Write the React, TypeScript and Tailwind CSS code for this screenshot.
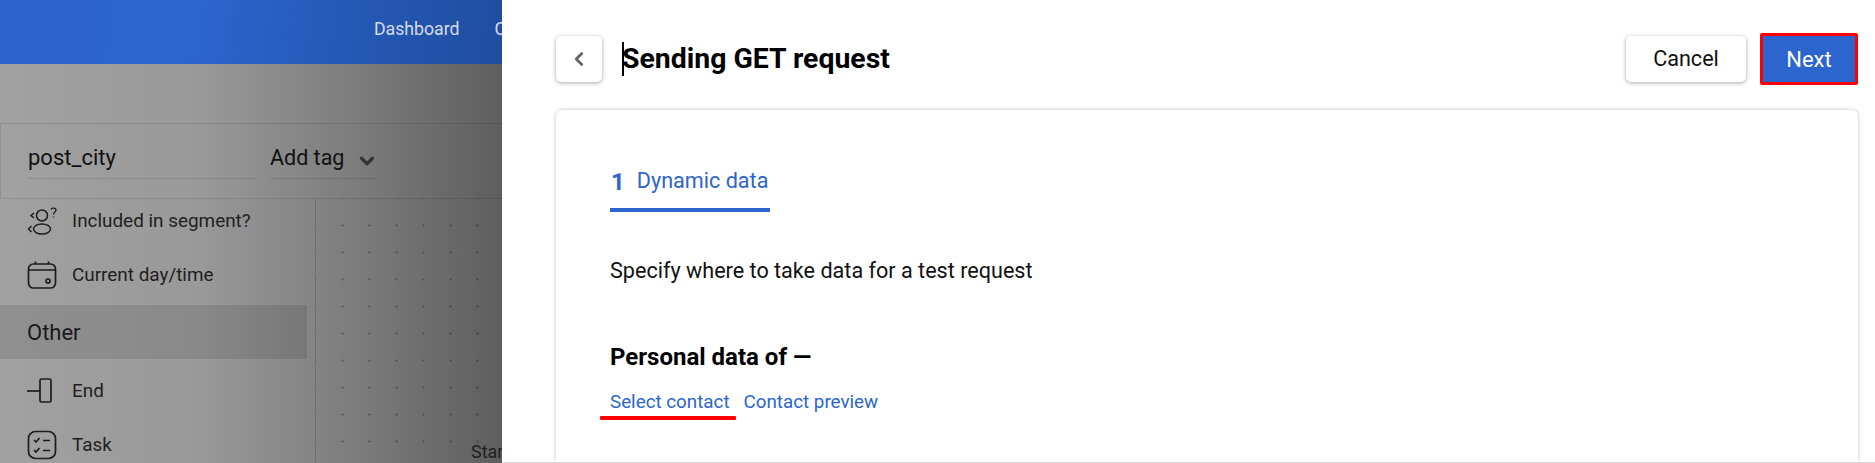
import { ChevronLeft, ChevronDown } from "lucide-react";

const SegmentIcon = () => (
   <svg width="32" height="30" viewBox="0 0 32 30" fill="none" stroke="#1c1c1c" strokeWidth="1.5">
      <ellipse cx="15" cy="9.5" rx="5.5" ry="5.500" />
      <ellipse cx="15" cy="23" rx="8.500" ry="5" />
      <path d="M7 7 4 9.500 7 12M4.500 20 1.500 23l3 3" />
      <path d="M24 3.500c.5-2 5-2 5 .5 0 2-2.500 2-2.500 4.500M26.500 10.500v1" strokeWidth="1.300" />
   </svg>
);

const CalendarIcon = () => (
   <svg width="30" height="30" viewBox="0 0 30 30" fill="none" stroke="#1c1c1c" strokeWidth="1.7">
      <rect x="1.500" y="4" width="27" height="24" rx="5" />
      <path d="M1.500 10h27M8.500 1.500V4M21.500 1.500V4" />
      <circle cx="21" cy="21" r="2" />
   </svg>
);

const EndIcon = () => (
   <svg width="26" height="26" viewBox="0 0 26 26" fill="none" stroke="#1c1c1c" strokeWidth="1.700">
      <path d="M0 13h13" />
      <rect x="13" y="1" width="11" height="23" rx="1.500" />
   </svg>
);

const TaskIcon = () => (
   <svg width="30" height="30" viewBox="0 0 30 30" fill="none" stroke="#1c1c1c" strokeWidth="1.700">
      <rect x="1.500" y="1.500" width="27" height="27" rx="7" />
      <path d="M7 10l2 2 3.500-4M7 20l2 2 3.500-4M16 10.500h7M16 20.500h7" />
   </svg>
);

const SideItem = ({ icon, label }: { icon: any; label: string }) => (
   <div className="flex h-[54px] items-center">
      <div className="flex w-[72px] justify-start pl-[27px] flex-none">{icon}</div>
      <span className="text-[18.900px] text-[#1f1f1f]">{label}</span>
   </div>
);

const LeftSide = () => (
   <div className="flex w-[502px] flex-none flex-col overflow-hidden">
      <div className="flex h-[64px] flex-none items-start bg-[linear-gradient(100deg,#2b63ca_0%,#2c65ce_38%,#1f4d9f_100%)] pl-[374px] pt-[18px] text-[17.700px] leading-[22px] text-[#d5dbe6] whitespace-nowrap">
         <span>Dashboard</span>
         <span className="ml-[35px]">Contacts</span>
      </div>
      <div className="flex flex-1 flex-col bg-[linear-gradient(90deg,#a1a1a1_0%,#999999_40%,#7d7d7d_70%,#5e5e5e_100%)] border-b border-[#d6d6d6]">
         <div className="h-[59px] flex-none" />
         <div className="flex h-[76px] flex-none gap-[12px] border-y border-l border-black/10 pl-[27px] pt-[16px]">
            <div className="h-[39px] w-[230px] border-b border-black/10 text-[22px] leading-[36px] text-[#111]">
               post_city
            </div>
            <div className="flex h-[39px] w-[106px] items-start border-b border-black/10 text-[21.500px] leading-[36px] text-[#111]">
               <span className="flex-none whitespace-nowrap">Add tag</span>
               <ChevronDown className="ml-[12px] mt-[10px] flex-none text-[#333]" size={22} strokeWidth={3.500} />
            </div>
         </div>
         <div className="flex flex-1 overflow-hidden">
            <div className="w-[316px] flex-none border-r border-black/15 mt-[-5px]">
               <SideItem icon={<SegmentIcon />} label="Included in segment?" />
               <SideItem icon={<CalendarIcon />} label="Current day/time" />
               <div className="mr-[8px] mt-[3px] flex h-[54px] items-center bg-black/10 pl-[27px] text-[22px] text-[#1a1a1a]">
                  Other
               </div>
               <div className="mt-[5px]">
                  <SideItem icon={<EndIcon />} label="End" />
                  <SideItem icon={<TaskIcon />} label="Task" />
               </div>
            </div>
            <div className="flex flex-1 items-end justify-end bg-[radial-gradient(circle,rgba(0,0,0,0.22)_1px,transparent_1.200px)] bg-[length:27px_27px] bg-[position:13px_13px] pb-[7px]">
               <span className="w-[31px] overflow-hidden text-[18px] whitespace-nowrap text-[#1f1f1f]">
                  Start
               </span>
            </div>
         </div>
      </div>
   </div>
);

const Panel = () => (
   <div className="flex flex-1 flex-col overflow-hidden bg-white border-b border-[#dcdcdc] pl-[54px] pr-[17px]">
      <div className="flex h-[110px] flex-none items-start pt-[36px]">
         <button className="flex h-[46px] w-[46px] items-center justify-center rounded-[5px] bg-white shadow-[0_1px_4px_rgba(0,0,0,0.35)]">
            <ChevronLeft className="text-[#666]" size={22} strokeWidth={3} />
         </button>
         <div className="ml-[20px] flex h-[46px] items-center">
            <span className="mr-[-2px] h-[34px] w-[2px] bg-black" />
            <h1 className="text-[28.400px] leading-[40px] font-bold text-black">Sending GET request</h1>
         </div>
         <div className="ml-auto flex items-center gap-[14px]">
            <button className="h-[46px] w-[120px] rounded-[5px] bg-white text-[21.600px] text-[#111] shadow-[0_1px_4px_rgba(0,0,0,0.35)]">
               Cancel
            </button>
            <button className="my-[-3px] h-[52px] w-[98px] rounded-[2px] border-[3px] border-[#ff0000] bg-[#2c65ce] text-[22px] text-white">
               Next
            </button>
         </div>
      </div>
      <div className="flex-1 rounded-t-[6px] pl-[54px] pt-[58px] shadow-[0_0_4px_rgba(0,0,0,0.25)]">
         <div className="flex h-[44px] w-[160px] items-start gap-[12px] border-b-[4px] border-[#2c65ce] pl-[1px] text-[#2c65ce]">
            <span className="text-[24px] font-bold leading-[28px]">1</span>
            <span className="text-[21.600px] leading-[26px]">Dynamic data</span>
         </div>
         <p className="mt-[44px] text-[21.600px] leading-[30px] text-[#111]">
            Specify where to take data for a test request
         </p>
         <h2 className="pt-[56px] text-[24px] font-bold leading-[30px] text-black">Personal data of —</h2>
         <div className="mt-[15px] flex gap-[14px] text-[18.800px] leading-[30px] text-[#2c65ce]">
            <span className="relative">
               Select contact
               <span className="absolute left-[-10px] top-[29px] h-[4px] w-[136px] rounded-[1px] bg-[#ff0000]" />
            </span>
            <span>Contact preview</span>
         </div>
      </div>
   </div>
);

export default function App() {
   return (
      <div className="flex h-[463px] w-[1875px] overflow-hidden font-['Roboto',sans-serif]">
         <LeftSide />
         <Panel />
      </div>
   );
}
